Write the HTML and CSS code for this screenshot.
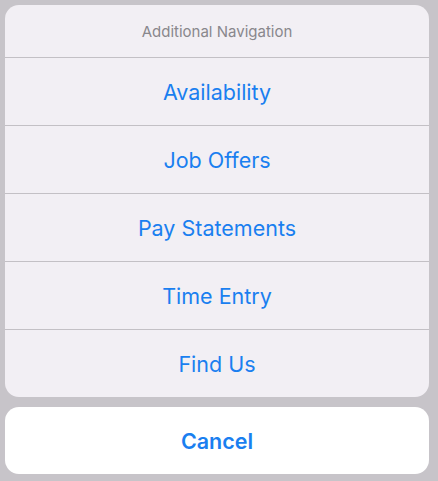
FILE: index.html
```html
<!DOCTYPE html>
<html>
<head>
<meta charset="utf-8">
<link rel="stylesheet" href="styles.css">
</head>
<body>
<div class="sheet">
  <div class="group">
    <div class="title">Additional Navigation</div>
    <div class="action">Availability</div>
    <div class="action">Job Offers</div>
    <div class="action">Pay Statements</div>
    <div class="action">Time Entry</div>
    <div class="action">Find Us</div>
  </div>
  <div class="cancel">Cancel</div>
</div>
</body>
</html>
```
FILE: styles.css
```css
html, body {
  margin: 0;
  padding: 0;
}
body {
  width: 438px;
  height: 481px;
  background: #c7c4c9;
  font-family: Inter, "Noto Sans", "Liberation Sans", sans-serif;
  overflow: hidden;
}
.sheet {
  display: flex;
  flex-direction: column;
  gap: 10px;
  padding: 5px 9px 0 5px;
}
.group {
  background: #f2eff4;
  border-radius: 14px;
  overflow: hidden;
}
.title {
  height: 52px;
  display: flex;
  align-items: center;
  justify-content: center;
  font-size: 15px;
  color: #89878c;
}
.action {
  height: 67px;
  border-top: 1px solid #c3c0c5;
  display: flex;
  align-items: center;
  justify-content: center;
  font-size: 21.5px;
  color: #1a7ff0;
}
.cancel {
  height: 67px;
  background: #ffffff;
  border-radius: 14px;
  display: flex;
  align-items: center;
  justify-content: center;
  font-size: 21.5px;
  font-weight: 600;
  color: #1a7ff0;
}
```
